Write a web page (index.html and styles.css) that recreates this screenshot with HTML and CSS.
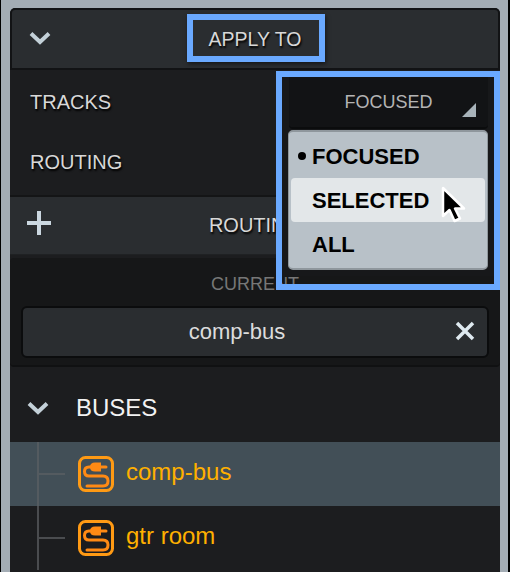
FILE: index.html
```html
<!DOCTYPE html>
<html lang="en">
<head>
<meta charset="utf-8">
<title>Apply To</title>
<link rel="stylesheet" href="styles.css">
</head>
<body>
<div class="frame">
  <main class="panel">
    <header class="bar bar-top">
      <svg class="chev" viewBox="0 0 22 14"><path d="M2 2.5 11 11 20 2.5"/></svg>
      <span class="bar-title">APPLY TO</span>
    </header>
    <section class="apply">
      <div class="row"><span class="row-label">TRACKS</span>
        <div class="select"><span>FOCUSED</span><svg class="tri" viewBox="0 0 14 14"><path d="M14 0V14H0Z"/></svg></div>
      </div>
      <div class="row"><span class="row-label">ROUTING</span></div>
    </section>
    <header class="bar bar-routing">
      <svg class="plus" viewBox="0 0 26 26"><path d="M13 1V25M1 13H25"/></svg>
      <span class="bar-title">ROUTING</span>
    </header>
    <section class="current">
      <div class="current-label">CURRENT</div>
      <div class="field"><span>comp-bus</span>
        <svg class="clear" viewBox="0 0 20 20"><path d="M2 2 18 18M18 2 2 18"/></svg>
      </div>
    </section>
    <section class="tree">
      <div class="tree-head">
        <svg class="chev" viewBox="0 0 22 14"><path d="M2 2.5 11 11 20 2.5"/></svg>
        <span>BUSES</span>
      </div>
      <div class="bus bus-active">
        <svg class="bus-icon" viewBox="0 0 36 36"><rect x="1.5" y="1.5" width="33" height="33" rx="6"/><path class="cable" d="M13 11H11Q6.500 11 6.500 15.500T11 20H25Q30 20 30 25T25 30H9"/><path class="prong" d="M21 11H28"/><path class="head" d="M12 11Q12 6.500 17 6.500H23V15.500H17Q12 15.500 12 11Z"/></svg>
        <span class="bus-name">comp-bus</span>
      </div>
      <div class="bus">
        <svg class="bus-icon" viewBox="0 0 36 36"><rect x="1.5" y="1.5" width="33" height="33" rx="6"/><path class="cable" d="M13 11H11Q6.500 11 6.500 15.500T11 20H25Q30 20 30 25T25 30H9"/><path class="prong" d="M21 11H28"/><path class="head" d="M12 11Q12 6.500 17 6.500H23V15.500H17Q12 15.500 12 11Z"/></svg>
        <span class="bus-name">gtr room</span>
      </div>
    </section>
    <div class="backdrop"></div>
    <ul class="menu">
      <li class="menu-item is-current">FOCUSED</li>
      <li class="menu-item is-hover">SELECTED</li>
      <li class="menu-item">ALL</li>
    </ul>
    <svg class="cursor" viewBox="0 0 26 38"><path d="M2 2V30L8.500 24 13.500 35 19 32.500 14 22.500H23Z"/></svg>
    <div class="mark mark-title"></div>
    <div class="mark mark-menu"></div>
  </main>
</div>
</body>
</html>
```
FILE: styles.css
```css
* { box-sizing: border-box; }
html, body { margin: 0; padding: 0; height: 100%; overflow: hidden; background: #000; }
body { font-family: "Liberation Sans", Arial, sans-serif; }
.frame {
  width: 507px; height: 572px; margin-left: 1px;
  padding: 8px 8px 0 9px;
  background: #a3acb4;
  overflow: hidden;
}
.panel {
  position: relative;
  width: 490px; height: 564px;
  background: #1c1d1f;
  border-radius: 5px 5px 0 0;
  overflow: hidden;
}
.bar {
  position: relative;
  display: flex; align-items: center; justify-content: center;
  background: #2a2d30;
  color: #d8d8d8;
  font-size: 20px;
  text-shadow: 1px 2px 2px #000;
}
.bar-top { height: 62px; border: 2px solid #121315; border-bottom-width: 2px; border-radius: 5px 5px 0 0; }
.bar-top .chev { position: absolute; left: 17px; top: 21px; }
.bar-routing { height: 60px; margin-top: 0; border-top: 2px solid #141516; border-bottom: 1px solid #1f2123; }
.bar-title { display: block; }
.bar-top .bar-title { font-size: 19.500px; }
.chev { width: 22px; height: 14px; }
.chev path { fill: none; stroke: #c3d0d8; stroke-width: 4; }
.plus { position: absolute; left: 16px; top: 13px; width: 26px; height: 26px; }
.plus path { fill: none; stroke: #cbd7e0; stroke-width: 4; }
.apply { height: 125px; padding-top: 2px; }
.row { display: flex; align-items: center; justify-content: space-between; height: 60px; padding: 0 12px 0 20px; }
.row-label { color: #d8d8d8; font-size: 20px; text-shadow: 1px 2px 2px #000; }
.select {
  position: relative; z-index: 2;
  display: flex; align-items: center; justify-content: center;
  width: 199px; height: 52px; margin-top: 2px;
  background: #121315;
  border-radius: 0 0 4px 4px;
  border-bottom: 2px solid #0b0c0d;
  color: #b4b4b4; font-size: 18px;
}
.tri { position: absolute; right: 12px; bottom: 10px; width: 14px; height: 14px; }
.tri path { fill: #a8b3ba; }
.current {
  height: 109px; margin-top: 3px;
  background: #161718;
  border-bottom: 2px solid #101112;
  padding: 15px 11px 0;
  border-radius: 4px;
}
.current-label { text-align: center; color: #777; font-size: 18px; line-height: 22px; height: 33px; }
.field {
  position: relative;
  display: flex; align-items: center; justify-content: center;
  height: 52px; padding-right: 36px;
  background: #2a2d30;
  border: 2px solid #0b0c0d;
  border-radius: 6px;
  color: #dcdcdc; font-size: 22px;
}
.clear { position: absolute; right: 12px; top: 13px; width: 20px; height: 20px; }
.clear path { fill: none; stroke: #dfeaf0; stroke-width: 3.500; }
.tree { background: #1c1d1f; }
.tree-head { display: flex; align-items: center; height: 75px; padding-left: 17px; gap: 27px; color: #f2f2f2; font-size: 24px; }
.tree-head .chev { margin-top: 6px; }
.tree-head span { margin-top: 7px; }
.bus {
  position: relative;
  display: flex; align-items: center; gap: 12px;
  height: 64px; padding-left: 68px;
  color: #ffb000; font-size: 24px;
}
.bus-name { margin-top: -4px; }
.bus::before { content: ""; position: absolute; left: 27px; top: 0; bottom: 0; width: 2px; background: #4a4c4f; }
.bus::after { content: ""; position: absolute; left: 27px; top: 31px; width: 28px; height: 2px; background: #4a4c4f; }
.bus-active { background: #424f57; }
.bus-active::before, .bus-active::after { background: #545b60; }
.bus-icon { width: 36px; height: 36px; flex: none; }
.bus-icon rect { fill: none; stroke: #ff9a14; stroke-width: 3; }
.bus-icon .cable, .bus-icon .prong { fill: none; stroke: #ff8a14; stroke-width: 3; stroke-linecap: round; }
.bus-icon .head { fill: #ff8a14; }
.backdrop { position: absolute; z-index: 1; left: 272px; top: 63px; width: 212px; height: 205px; background: #17181a; }
.menu {
  position: absolute; z-index: 3;
  left: 278px; top: 122px; width: 200px; height: 140px;
  margin: 0; padding: 2px;
  list-style: none;
  background: #b8c1c8;
  border: 2px solid #8f979d;
  border-width: 2px 1px;
  border-radius: 5px;
}
.menu-item {
  position: relative;
  height: 44px; line-height: 46px; padding-left: 21px;
  color: #000; font-size: 22px; font-weight: 700;
  border-radius: 4px;
}
.menu-item.is-hover { background: #e3e7e9; }
.menu-item.is-current::before { content: ""; position: absolute; left: 7px; top: 18px; width: 8px; height: 8px; border-radius: 50%; background: #000; }
.cursor { position: absolute; z-index: 4; left: 431px; top: 178px; width: 26px; height: 38px; }
.cursor path { fill: #000; stroke: #fff; stroke-width: 2.500; stroke-linejoin: round; }
.mark { position: absolute; z-index: 5; border: 6px solid #6aa9ff; }
.mark-title { left: 177px; top: 6px; width: 138px; height: 48px; box-shadow: 1px 2px 4px rgba(0,0,0,.5); }
.mark-menu { left: 266px; top: 63px; width: 224px; height: 219px; }
```
